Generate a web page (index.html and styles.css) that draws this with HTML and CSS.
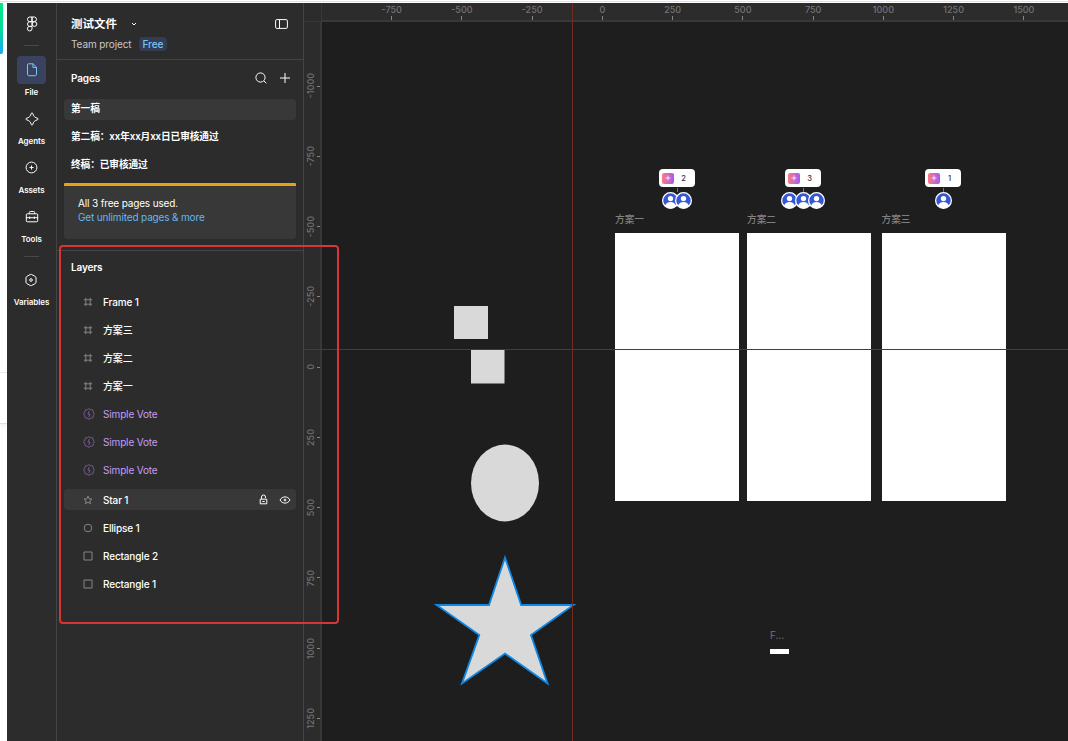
FILE: index.html
```html
<!DOCTYPE html>
<html lang="zh-CN">
<head>
    <meta charset="UTF-8">
    <meta name="viewport" content="width=device-width, initial-scale=1.0">
    <title>测试文件</title>
    <link rel="stylesheet" href="styles.css">
</head>
<body>
    <!-- shared icons -->
    <svg class="symbols">
        <symbol id="frame" viewBox="0 0 10 10"><path d="M2.8 .8v8.4M7.2 .8v8.4M.8 2.8h8.4M.8 7.2h8.4"/></symbol>
        <symbol id="widget" viewBox="0 0 12 12"><path d="M6 .7 7.6 1.6 9.6 1.9 10.2 3.9 11.3 5.8 10.3 7.6 9.9 9.7 7.9 10.2 6 11.3 4.1 10.2 2.1 9.7 1.7 7.6 .7 5.8 1.8 3.9 2.4 1.9 4.4 1.6ZM6.4 3 4.9 6.1h2.2L5.8 9"/></symbol>
        <symbol id="square" viewBox="0 0 10 10"><path d="M1 1h8v8H1z"/></symbol>
        <symbol id="avatar" viewBox="0 0 16 16">
            <circle class="avatar-bg" cx="8" cy="8" r="7.4"/>
            <circle class="avatar-fg" cx="8" cy="6.2" r="2.5"/>
            <path class="avatar-fg" d="M2.8 12.6c1.1-2.2 3-3.2 5.2-3.2s4.100 1 5.200 3.200A7.400 7.400 0 0 1 8 15.400a7.400 7.400 0 0 1-5.200-2.800z"/>
            <circle class="avatar-ring" cx="8" cy="8" r="7.4"/>
        </symbol>
    </svg>

    <div class="app">
        <aside class="backdrop">
            <div class="backdrop-top"></div>
            <div class="backdrop-middle"></div>
            <div class="backdrop-card"></div>
        </aside>

        <nav class="rail">
            <svg class="logo" viewBox="0 0 12 16"><path d="M6 1H3.400a2.400 2.400 0 0 0 0 4.700H6zM6 1h2.600a2.400 2.400 0 0 1 0 4.700H6zM6 5.700H3.400a2.400 2.400 0 0 0 0 4.700H6zM6 10.400H3.400A2.300 2.300 0 1 0 6 12.700z"/><circle cx="8.500" cy="8.050" r="2.350"/></svg>
            <hr>
            <a class="rail-item active">
                <span class="rail-icon"><svg viewBox="0 0 16 16"><path d="M4.500 1.800h4.600l3.400 3.400v7.300a1.200 1.200 0 0 1-1.200 1.200H4.700a1.200 1.200 0 0 1-1.200-1.200V2.800a1 1 0 0 1 1-1zM8.900 2v3.400h3.500"/></svg></span>
                File
            </a>
            <a class="rail-item">
                <span class="rail-icon"><svg viewBox="0 0 16 16"><path d="M7.300 2.300q.7-1 1.400 0C9.200 5 11 6.800 13.700 7.300q1 .7 0 1.400C11 9.200 9.200 11 8.700 13.700q-.7 1-1.400 0C6.800 11 5 9.200 2.300 8.700q-1-.7 0-1.400C5 6.800 6.800 5 7.300 2.300z"/></svg></span>
                Agents
            </a>
            <a class="rail-item">
                <span class="rail-icon"><svg viewBox="0 0 16 16"><circle cx="7.500" cy="7.500" r="5.400"/><path d="M7.500 5.500v4M5.500 7.500h4"/></svg></span>
                Assets
            </a>
            <a class="rail-item">
                <span class="rail-icon"><svg viewBox="0 0 16 16"><path d="M5.300 4.800V3.500a1 1 0 0 1 1-1h3.400a1 1 0 0 1 1 1v1.300M3.300 4.800h9.400a1 1 0 0 1 1 1v6a1 1 0 0 1-1 1H3.300a1 1 0 0 1-1-1v-6a1 1 0 0 1 1-1zM2.300 8.700h11.400M5.700 7.500v2.400M10.300 7.500v2.400"/></svg></span>
                Tools
            </a>
            <hr class="second">
            <a class="rail-item">
                <span class="rail-icon"><svg viewBox="0 0 16 16"><path d="M7.300 2.500q.7-.4 1.400 0l3.600 2q.7.400.7 1.200v4.600q0 .8-.7 1.200l-3.600 2q-.7.400-1.400 0l-3.600-2Q3 11.100 3 10.300V5.700q0-.8.7-1.200z"/><circle cx="8" cy="8" r="1.300"/></svg></span>
                Variables
            </a>
        </nav>

        <section class="panel">
            <header class="file-header">
                <div class="file-row">
                    <h1>测试文件</h1>
                    <svg class="chevron" viewBox="0 0 6 4"><path d="M1 1l2 2 2-2"/></svg>
                    <svg class="sidebar-toggle" viewBox="0 0 13 10"><rect x=".6" y=".6" width="11.800" height="8.800" rx="1.200"/><path d="M4.500 .6v8.800"/></svg>
                </div>
                <div class="project-row">
                    <span>Team project</span>
                    <span class="badge">Free</span>
                </div>
            </header>

            <div class="pages">
                <div class="section-head">
                    <h2>Pages</h2>
                    <svg class="search" viewBox="0 0 12 12"><circle cx="5.500" cy="5.500" r="4.600"/><path d="M9 9l2.300 2.300"/></svg>
                    <svg class="plus" viewBox="0 0 10 10"><path d="M5 0v10M0 5h10"/></svg>
                </div>
                <ul class="page-list">
                    <li class="selected">第一稿</li>
                    <li>第二稿：xx年xx月xx日已审核通过</li>
                    <li>终稿：已审核通过</li>
                </ul>
                <div class="upgrade">
                    <p>All 3 free pages used.</p>
                    <a>Get unlimited pages &amp; more</a>
                </div>
            </div>

            <div class="layers">
                <h2>Layers</h2>
                <ul class="layer-list">
                    <li><svg><use href="#frame"/></svg>Frame 1</li>
                    <li><svg><use href="#frame"/></svg>方案三</li>
                    <li><svg><use href="#frame"/></svg>方案二</li>
                    <li><svg><use href="#frame"/></svg>方案一</li>
                    <li class="vote"><svg><use href="#widget"/></svg>Simple Vote</li>
                    <li class="vote"><svg><use href="#widget"/></svg>Simple Vote</li>
                    <li class="vote"><svg><use href="#widget"/></svg>Simple Vote</li>
                    <li class="selected">
                        <svg viewBox="0 0 10 10"><path d="M5 1l1.100 2.800 3 .2-2.300 1.900.8 2.900L5 7.200 2.400 8.800l.8-2.900L.9 4l3-.2z"/></svg>Star 1
                        <span class="layer-actions">
                            <svg class="lock" viewBox="0 0 9 11"><path d="M1.200 5.200h6.600v4.600H1.200zM2.500 5V3a2 2 0 0 1 4 0v1M3.300 7.500h2.400"/></svg>
                            <svg class="eye" viewBox="0 0 12 8"><path d="M1 4c1.200-2.100 3-3.100 5-3.100S9.800 1.900 11 4C9.800 6.100 8 7.100 6 7.100S2.200 6.100 1 4z"/><circle cx="6" cy="4" r=".9"/></svg>
                        </span>
                    </li>
                    <li><svg viewBox="0 0 10 10"><circle cx="5" cy="5" r="3.800"/></svg>Ellipse 1</li>
                    <li><svg><use href="#square"/></svg>Rectangle 2</li>
                    <li><svg><use href="#square"/></svg>Rectangle 1</li>
                </ul>
            </div>
        </section>

        <main class="workspace">
            <div class="corner"></div>
            <div class="ruler ruler-x">
                <span>-750</span><span>-500</span><span>-250</span><span>0</span><span>250</span><span>500</span><span>750</span><span>1000</span><span>1250</span><span>1500</span>
            </div>
            <div class="ruler ruler-y">
                <span><b>-1000</b></span><span><b>-750</b></span><span><b>-500</b></span><span><b>-250</b></span><span><b>0</b></span><span><b>250</b></span><span><b>500</b></span><span><b>750</b></span><span><b>1000</b></span><span><b>1250</b></span>
            </div>
            <div class="canvas">
                <svg class="shapes" viewBox="322 22 746 719">
                    <rect x="454" y="306" width="34" height="33"/>
                    <rect x="471" y="350" width="33.500" height="33.500"/>
                    <ellipse cx="505" cy="483" rx="34" ry="38.500"/>
                    <path class="star" d="M505 557.500 521.200 605H573.500L531 635 547.500 683.500 505 653.500 462 683.500 479.300 635 436.500 605H489z"/>
                </svg>
                <div class="artboard one"><span>方案一</span></div>
                <div class="artboard two"><span>方案二</span></div>
                <div class="artboard three"><span>方案三</span></div>
                <div class="artboard small"><span>F...</span></div>

                <div class="vote-widget vote-one">
                    <div class="counter"><i><svg viewBox="0 0 6 6"><path d="M3 .5v5M.5 3h5"/></svg></i><span>2</span></div>
                    <div class="voters"><svg><use href="#avatar"/></svg><svg><use href="#avatar"/></svg></div>
                </div>
                <div class="vote-widget vote-two">
                    <div class="counter"><i><svg viewBox="0 0 6 6"><path d="M3 .5v5M.5 3h5"/></svg></i><span>3</span></div>
                    <div class="voters"><svg><use href="#avatar"/></svg><svg><use href="#avatar"/></svg><svg><use href="#avatar"/></svg></div>
                </div>
                <div class="vote-widget vote-three">
                    <div class="counter"><i><svg viewBox="0 0 6 6"><path d="M3 .5v5M.5 3h5"/></svg></i><span>1</span></div>
                    <div class="voters"><svg><use href="#avatar"/></svg></div>
                </div>
            </div>
            <div class="guide guide-x"></div>
            <div class="guide guide-y"></div>
        </main>
    </div>

    <div class="highlight"></div>
</body>
</html>
```
FILE: styles.css
```css
* {
    box-sizing: border-box;
}
body {
    margin: 0;
    height: 741px;
    overflow: hidden;
    background: #fdfdfd;
    color: #fff;
    font-family: Inter, "Noto Sans CJK SC", sans-serif;
    font-size: 10px;
    font-weight: 500;
}
h1, h2, p, ul {
    margin: 0;
    padding: 0;
    list-style: none;
}
svg {
    display: block;
    flex: none;
    fill: none;
    stroke: currentColor;
}
.symbols {
    position: absolute;
    width: 0;
    height: 0;
}
.app {
    display: grid;
    grid-template-columns: 7px 50px 247px 1fr;
    height: 741px;
    border-top: 1px solid #fff;
    padding-top: 2px;
    background: linear-gradient(#e0e0e0 1px, #fff 1px, #fff 2px, #fdfdfd 2px);
}

/* Page visible behind the window */
.backdrop {
    display: flex;
    flex-direction: column;
}
.backdrop-top {
    width: 3px;
    height: 51px;
    background: linear-gradient(#00e884, #08dc98 50%, #18a8f8);
    border-radius: 0 0 2px 0;
}
.backdrop-middle {
    height: 318px;
}
.backdrop-card {
    height: 52px;
    background: #fff;
    border-top: 1px solid #e9e9f2;
    border-bottom: 1px solid #dedee6;
    box-shadow: 0 2px 4px #eee;
}

/* Left rail */
.rail {
    display: flex;
    flex-direction: column;
    align-items: center;
    background: #2c2c2c;
    border-right: 1px solid #444;
    padding-top: 13px;
    font-size: 8px;
    font-weight: 600;
    letter-spacing: -0.05px;
}
.logo {
    width: 12px;
    height: 16px;
}
.rail hr {
    width: 15px;
    height: 1px;
    margin: 13px 0 10px;
    border: 0;
    background: #484848;
}
.rail .second {
    margin: 4px 0 9px;
}
.rail-item {
    display: flex;
    flex-direction: column;
    align-items: center;
    height: 49px;
    line-height: 16px;
}
.rail-icon {
    display: flex;
    align-items: center;
    justify-content: center;
    width: 29px;
    height: 28px;
    border-radius: 4px;
}
.rail-icon svg {
    width: 16px;
    height: 16px;
}
.active .rail-icon {
    background: #394360;
    color: #7cc4f8;
}

/* File panel */
.panel {
    background: #2c2c2c;
    border-right: 1px solid #444;
    letter-spacing: -0.15px;
}
.file-header {
    height: 57px;
    border-bottom: 1px solid #444;
    padding: 12px 14px 0;
}
.file-row {
    display: flex;
    align-items: center;
    height: 18px;
}
h1 {
    font-size: 11.5px;
    font-weight: 700;
    line-height: 18px;
    letter-spacing: 0;
}
.chevron {
    width: 6px;
    height: 4px;
    margin-left: 14px;
}
.sidebar-toggle {
    width: 13px;
    height: 10px;
    margin-left: auto;
    margin-right: 1px;
}
.project-row {
    display: flex;
    align-items: center;
    gap: 7px;
    height: 14px;
    margin-top: 4px;
    color: #c8c8c8;
    font-weight: 400;
    letter-spacing: -0.1px;
}
.badge {
    padding: 0 4px;
    line-height: 14px;
    border-radius: 4px;
    background: #323c52;
    color: #7cc4f8;
    font-weight: 500;
}
.pages {
    height: 191px;
    padding: 0 7px;
    border-bottom: 1px solid #444;
}
.section-head {
    display: flex;
    align-items: center;
    height: 35px;
    padding: 0 6px 0 7px;
}
h2 {
    font-size: 10px;
    font-weight: 600;
}
.search {
    width: 12px;
    height: 12px;
    margin-left: auto;
}
.plus {
    width: 10px;
    height: 10px;
    margin-left: 13px;
}
.page-list {
    display: grid;
    gap: 7px;
    padding-top: 4px;
}
.page-list li {
    height: 21px;
    padding-left: 7px;
    line-height: 20px;
    font-size: 9.7px;
    font-weight: 600;
    letter-spacing: -0.1px;
    border-radius: 4px;
}
.selected {
    background: #383838;
}
.upgrade {
    height: 56px;
    margin-top: 7px;
    padding: 10px 14px;
    border-top: 3px solid #e5a50f;
    border-radius: 1px 1px 4px 4px;
    background: #383838;
    font-weight: 400;
    line-height: 14px;
}
.upgrade a {
    color: #62b8f2;
}
.layers {
    padding: 9px 7px 0;
}
.layers h2 {
    padding-left: 7px;
    line-height: 14px;
}
.layer-list {
    display: grid;
    gap: 7px;
    padding-top: 17px;
}
.layer-list li {
    display: flex;
    align-items: center;
    gap: 10px;
    height: 21px;
    padding: 0 5px 0 19px;
    border-radius: 4px;
}
.layer-list .selected {
    margin-top: 2px;
}
.layer-list li > svg {
    width: 10px;
    height: 10px;
    margin-top: 1px;
    stroke: #858585;
}
.layer-list .vote {
    gap: 9px;
    color: #c69cf4;
    font-weight: 400;
}
.layer-list .vote svg {
    width: 12px;
    height: 12px;
    margin-right: -1px;
    stroke: #765c90;
}
.layer-actions {
    display: flex;
    align-items: center;
    gap: 11px;
    margin-left: auto;
}
.lock {
    width: 9px;
    height: 11px;
}
.eye {
    width: 12px;
    height: 8px;
}

/* Rulers and canvas */
.workspace {
    position: relative;
    display: grid;
    grid-template-columns: 18px 1fr;
    grid-template-rows: 19px 1fr;
    min-width: 0;
    height: 738px;
    overflow: hidden;
}
.corner, .ruler {
    background: #2c2c2c;
}
.corner {
    border-right: 1px solid #383838;
    border-bottom: 1px solid #383838;
}
.ruler {
    display: flex;
    overflow: hidden;
    color: #737373;
    font-size: 9px;
    font-weight: 500;
}
.ruler span {
    flex: none;
    display: flex;
    justify-content: space-between;
    align-items: center;
}
.ruler span::after {
    content: "";
    background: #858585;
}
.ruler-x {
    padding-left: 34.5px;
    border-bottom: 2px solid #383838;
}
.ruler-x span {
    flex-direction: column;
    width: 70.25px;
    line-height: 13px;
}
.ruler-x span::after {
    width: 1px;
    height: 4px;
}
.ruler-y {
    flex-direction: column;
    padding-top: 29px;
    border-right: 2px solid #383838;
}
.ruler-y span {
    height: 70.25px;
}
.ruler-y b {
    font-weight: 500;
    line-height: 13px;
    writing-mode: vertical-rl;
    transform: rotate(180deg);
}
.ruler-y span::after {
    width: 3px;
    height: 1px;
}
.canvas {
    position: relative;
    overflow: hidden;
    background: #1e1e1e;
}
.shapes {
    width: 746px;
    height: 719px;
    fill: #d9d9d9;
    stroke: none;
}
.star {
    stroke: #0d88e6;
    stroke-width: 1.8;
}
.artboard {
    position: absolute;
    top: 211px;
    width: 124px;
    height: 268px;
    background: #fff;
}
.artboard span {
    position: absolute;
    left: 0;
    top: -20px;
    line-height: 14px;
    color: #808080;
    font-size: 9.7px;
    font-weight: 500;
}
.one {
    left: 293px;
}
.two {
    left: 425px;
}
.three {
    left: 559.5px;
}
.small {
    left: 448px;
    top: 627px;
    width: 19px;
    height: 5px;
}
.small span {
    color: #666;
}
.vote-widget {
    position: absolute;
    top: 147px;
    display: flex;
    flex-direction: column;
    align-items: center;
    width: 50px;
}
.vote-one {
    left: 330px;
}
.vote-two {
    left: 456px;
}
.vote-three {
    left: 596px;
}
.counter {
    display: flex;
    align-items: center;
    width: 36px;
    height: 18px;
    padding: 0 3px;
    border-radius: 4px;
    background: #fff;
    color: #333;
    font-size: 7.5px;
}
.counter i {
    display: flex;
    align-items: center;
    justify-content: center;
    width: 12px;
    height: 11px;
    border-radius: 2px;
    background: linear-gradient(90deg, #fa7b80, #a659fb);
    color: #fff;
}
.counter i svg {
    width: 6px;
    height: 6px;
    stroke-width: 0.8;
}
.counter span {
    flex: 1;
    padding-left: 1px;
    text-align: center;
}
.voters {
    display: flex;
    flex-wrap: wrap;
    justify-content: center;
    padding: 0 1.5px;
}
.voters::before {
    content: "";
    width: 1px;
    height: 5px;
    margin: 0 24px;
    background: linear-gradient(transparent 1px, #777 1px);
}
.voters svg {
    width: 17px;
    height: 17px;
    margin: 0 -1.7px;
}
.avatar-bg {
    fill: #3557d6;
    stroke: none;
}
.avatar-fg {
    fill: #fff;
    stroke: none;
}
.avatar-ring {
    stroke: #fff;
    stroke-width: 1.2;
}
.guide {
    position: absolute;
    background: #752a20;
}
.guide-x {
    left: 268px;
    top: 0;
    width: 1px;
    height: 738px;
}
.guide-y {
    left: 0;
    top: 346px;
    width: 764px;
    height: 1px;
}

/* Red box around the layer list */
.highlight {
    position: absolute;
    left: 59px;
    top: 245px;
    width: 280px;
    height: 379px;
    border: 2px solid #d83636;
    border-radius: 4px;
}
```
